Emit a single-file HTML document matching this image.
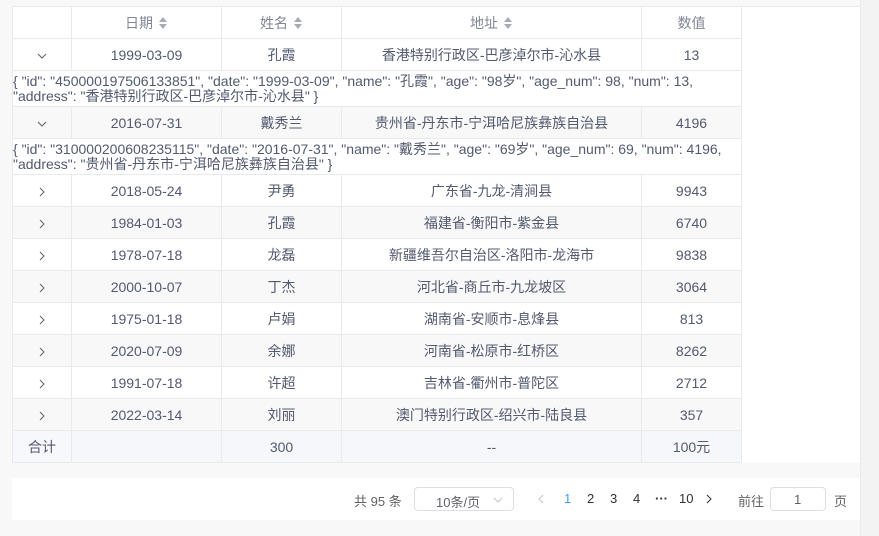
<!DOCTYPE html>
<html><head><meta charset="utf-8"><style>
*{box-sizing:border-box;margin:0;padding:0}
body{width:879px;height:536px;background:#f8f8f9;font-family:"Liberation Sans","Noto Sans CJK SC",sans-serif;font-size:14px;color:#515a6e;position:relative;overflow:hidden}
.sb{position:absolute;left:860px;top:0;width:19px;height:536px;background:#f3f3f4;border-left:1px solid #ebebeb}
.wrap{position:absolute;left:12px;top:6px;width:849px;height:457px;background:#fff;border:1px solid #e8eaec;border-bottom:none}
table{position:absolute;left:-1px;top:-1px;border-collapse:collapse;table-layout:fixed;width:730px}
td,th{border:1px solid #e8eaec;text-align:center;height:32px;font-weight:normal;white-space:nowrap}
th{color:#808695;background:#fff}
tr.s td{background:#f8f8f9}
tr.e td{height:36px;text-align:left;white-space:nowrap;line-height:15px;padding:0;color:#515a6e}
tr.f td{background:#f5f7fa}
tr.f td:first-child{background:#f7f8fb}
.ar{display:inline-block;margin-left:6px;vertical-align:-1px;width:9px;height:12px;position:relative}
.ar:before,.ar:after{content:"";position:absolute;left:0;border-left:4.5px solid transparent;border-right:4.5px solid transparent}
.ar:before{top:0;border-bottom:5px solid #a8abb2}
.ar:after{bottom:0;border-top:5px solid #a8abb2}
svg{vertical-align:middle}
.pg{position:absolute;left:12px;top:478px;width:848px;height:42px;background:#fff;font-size:13px;color:#606266}
.pg span{position:absolute;top:13px}
.box{position:absolute;border:1px solid #dcdfe6;border-radius:4px;height:24px;top:9px}
</style></head><body>
<div class="sb"></div>
<div class="wrap">
<table>
<colgroup><col style="width:59px"><col style="width:150px"><col style="width:120px"><col style="width:300px"><col style="width:100px"></colgroup>
<tr><th></th><th>日期<i class="ar"></i></th><th>姓名<i class="ar"></i></th><th>地址<i class="ar"></i></th><th>数值</th></tr>
<tr><td><svg width="10" height="6"><path d="M1 1l4 4 4-4" fill="none" stroke="#606266" stroke-width="1"/></svg></td><td>1999-03-09</td><td>孔霞</td><td>香港特别行政区-巴彦淖尔市-沁水县</td><td>13</td></tr>
<tr class="e"><td colspan="5">{ "id": "450000197506133851", "date": "1999-03-09", "name": "孔霞", "age": "98岁", "age_num": 98, "num": 13,<br>"address": "香港特别行政区-巴彦淖尔市-沁水县" }</td></tr>
<tr class="s"><td><svg width="10" height="6"><path d="M1 1l4 4 4-4" fill="none" stroke="#606266" stroke-width="1"/></svg></td><td>2016-07-31</td><td>戴秀兰</td><td>贵州省-丹东市-宁洱哈尼族彝族自治县</td><td>4196</td></tr>
<tr class="e"><td colspan="5">{ "id": "310000200608235115", "date": "2016-07-31", "name": "戴秀兰", "age": "69岁", "age_num": 69, "num": 4196,<br>"address": "贵州省-丹东市-宁洱哈尼族彝族自治县" }</td></tr>
<tr><td><svg width="6" height="10"><path d="M1 1l4 4-4 4" fill="none" stroke="#606266"/></svg></td><td>2018-05-24</td><td>尹勇</td><td>广东省-九龙-清涧县</td><td>9943</td></tr>
<tr class="s"><td><svg width="6" height="10"><path d="M1 1l4 4-4 4" fill="none" stroke="#606266"/></svg></td><td>1984-01-03</td><td>孔霞</td><td>福建省-衡阳市-紫金县</td><td>6740</td></tr>
<tr><td><svg width="6" height="10"><path d="M1 1l4 4-4 4" fill="none" stroke="#606266"/></svg></td><td>1978-07-18</td><td>龙磊</td><td>新疆维吾尔自治区-洛阳市-龙海市</td><td>9838</td></tr>
<tr class="s"><td><svg width="6" height="10"><path d="M1 1l4 4-4 4" fill="none" stroke="#606266"/></svg></td><td>2000-10-07</td><td>丁杰</td><td>河北省-商丘市-九龙坡区</td><td>3064</td></tr>
<tr><td><svg width="6" height="10"><path d="M1 1l4 4-4 4" fill="none" stroke="#606266"/></svg></td><td>1975-01-18</td><td>卢娟</td><td>湖南省-安顺市-息烽县</td><td>813</td></tr>
<tr class="s"><td><svg width="6" height="10"><path d="M1 1l4 4-4 4" fill="none" stroke="#606266"/></svg></td><td>2020-07-09</td><td>余娜</td><td>河南省-松原市-红桥区</td><td>8262</td></tr>
<tr><td><svg width="6" height="10"><path d="M1 1l4 4-4 4" fill="none" stroke="#606266"/></svg></td><td>1991-07-18</td><td>许超</td><td>吉林省-衢州市-普陀区</td><td>2712</td></tr>
<tr class="s"><td><svg width="6" height="10"><path d="M1 1l4 4-4 4" fill="none" stroke="#606266"/></svg></td><td>2022-03-14</td><td>刘丽</td><td>澳门特别行政区-绍兴市-陆良县</td><td>357</td></tr>
<tr class="f"><td>合计</td><td></td><td>300</td><td>--</td><td>100元</td></tr>
</table>
</div>
<div class="pg">
<span style="left:342px">共 95 条</span>
<div class="box" style="left:402px;width:100px"><span style="left:21px;top:4px">10条/页</span><svg style="position:absolute;left:78px;top:9px" width="10" height="6"><path d="M1 1l4 4 4-4" fill="none" stroke="#c0c4cc"/></svg></div>
<svg style="position:absolute;left:526px;top:16px" width="6" height="10"><path d="M5 1l-4 4 4 4" fill="none" stroke="#c0c4cc"/></svg>
<span style="left:552px;color:#409eff">1</span>
<span style="left:575px;color:#303133">2</span>
<span style="left:598px;color:#303133">3</span>
<span style="left:621px;color:#303133">4</span>
<span style="left:643px;color:#303133;font-weight:bold">···</span>
<span style="left:667px;color:#303133">10</span>
<svg style="position:absolute;left:694px;top:16px" width="6" height="10"><path d="M1 1l4 4-4 4" fill="none" stroke="#303133"/></svg>
<span style="left:726px">前往</span>
<div class="box" style="left:758px;width:56px"><span style="left:23px;top:4px">1</span></div>
<span style="left:822px">页</span>
</div>
</body></html>
